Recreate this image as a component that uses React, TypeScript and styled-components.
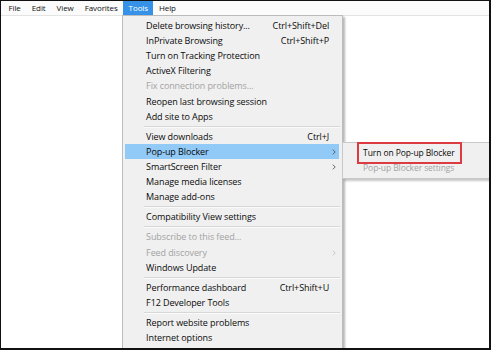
import React from "react";
import styled, { createGlobalStyle } from "styled-components";

const GlobalStyle = createGlobalStyle`
  html, body {
    margin: 0;
    padding: 0;
    background: #ffffff;
  }
  * {
    box-sizing: border-box;
  }
`;

const FONT = `"Open Sans", "Noto Sans", "DejaVu Sans", sans-serif`;

const Frame = styled.div`
  position: relative;
  width: 491px;
  height: 350px;
  display: flex;
  flex-direction: column;
  border-style: solid;
  border-color: #111111;
  border-width: 1px 2px 2px 1px;
  background: #ffffff;
  font-family: ${FONT};
  font-size: 8px;
  color: #000000;
  overflow: hidden;
`;

const MenuBar = styled.div`
  display: flex;
  height: 15px;
  padding-left: 2px;
  background: #fbfbfb;
  border-bottom: 1px solid #e4e4e4;
`;

const BarItem = styled.div<{ $active?: boolean }>`
  position: relative;
  height: 14px;
  line-height: 14px;
  padding: 0 5.5px;
  letter-spacing: -0.1px;
  background: ${(p) => (p.$active ? "#3592e8" : "transparent")};
  color: ${(p) => (p.$active ? "#ffffff" : "#111111")};
`;

const Page = styled.div`
  flex: 1;
  background: #ffffff;
`;

const Dropdown = styled.div`
  position: absolute;
  left: -1px;
  top: 14px;
  width: 221px;
  padding: 2px 0 2px;
  background: #f0f0f0;
  border: 1px solid #bcbcbc;
  box-shadow: 2px 2px 2px rgba(0, 0, 0, 0.28);
  color: #000000;
  font-size: 9px;
  z-index: 2;
`;

const Row = styled.div<{ $hot?: boolean; $disabled?: boolean }>`
  position: relative;
  display: flex;
  align-items: center;
  height: 15.2px;
  margin: 0 3px 0 2px;
  padding: 0 3px 0 21px;
  background: ${(p) => (p.$hot ? "#91c9f7" : "transparent")};
  color: ${(p) => (p.$disabled ? "#a3a3a3" : "#0a0a0a")};
  letter-spacing: -0.1px;
  white-space: nowrap;
`;

const Label = styled.span`
  flex: 1;
`;

const Shortcut = styled.span`
  margin-right: 7px;
`;

const Arrow = styled.svg<{ $disabled?: boolean }>`
  width: 4px;
  height: 6px;
  stroke: ${(p) => (p.$disabled ? "#c4c4c4" : "#555555")};
  fill: none;
`;

const Separator = styled.div`
  height: 4.8px;
  display: flex;
  align-items: center;
  padding-left: 21px;
  &::after {
    content: "";
    flex: 1;
    margin-right: 2px;
    border-top: 1px solid #d7d7d7;
    border-bottom: 1px solid #fbfbfb;
  }
`;

const SubMenu = styled.div`
  position: absolute;
  left: calc(100% + 3px);
  top: -2px;
  width: 148px;
  padding: 2px 0;
  background: #f0f0f0;
  border: 1px solid #c8c8c8;
  box-shadow: 2px 2px 2px rgba(0, 0, 0, 0.22);
  font-size: 8.5px;
  letter-spacing: -0.1px;
`;

const SubRow = styled.div<{ $disabled?: boolean }>`
  display: flex;
  align-items: center;
  height: 15.2px;
  padding-left: 20px;
  color: ${(p) => (p.$disabled ? "#a3a3a3" : "#0a0a0a")};
  white-space: nowrap;
`;

const Marked = styled.span`
  position: relative;
  &::before {
    content: "";
    position: absolute;
    inset: -4px -7px -4px -6px;
    border: 2px solid #dd3b42;
  }
`;

type Item =
  | { kind: "sep" }
  | {
      kind: "item";
      label: string;
      shortcut?: string;
      arrow?: boolean;
      disabled?: boolean;
      hot?: boolean;
    };

const items: Item[] = [
  { kind: "item", label: "Delete browsing history...", shortcut: "Ctrl+Shift+Del" },
  { kind: "item", label: "InPrivate Browsing", shortcut: "Ctrl+Shift+P" },
  { kind: "item", label: "Turn on Tracking Protection" },
  { kind: "item", label: "ActiveX Filtering" },
  { kind: "item", label: "Fix connection problems...", disabled: true },
  { kind: "item", label: "Reopen last browsing session" },
  { kind: "item", label: "Add site to Apps" },
  { kind: "sep" },
  { kind: "item", label: "View downloads", shortcut: "Ctrl+J" },
  { kind: "item", label: "Pop-up Blocker", arrow: true, hot: true },
  { kind: "item", label: "SmartScreen Filter", arrow: true },
  { kind: "item", label: "Manage media licenses" },
  { kind: "item", label: "Manage add-ons" },
  { kind: "sep" },
  { kind: "item", label: "Compatibility View settings" },
  { kind: "sep" },
  { kind: "item", label: "Subscribe to this feed...", disabled: true },
  { kind: "item", label: "Feed discovery", arrow: true, disabled: true },
  { kind: "item", label: "Windows Update" },
  { kind: "sep" },
  { kind: "item", label: "Performance dashboard", shortcut: "Ctrl+Shift+U" },
  { kind: "item", label: "F12 Developer Tools" },
  { kind: "sep" },
  { kind: "item", label: "Report website problems" },
  { kind: "item", label: "Internet options" },
];

const Chevron: React.FC<{ disabled?: boolean }> = ({ disabled }) => (
  <Arrow $disabled={disabled} viewBox="0 0 4 6">
    <path d="M0.8 0.6 L3.2 3 L0.8 5.4" strokeWidth="0.9" />
  </Arrow>
);

const ToolsMenu: React.FC = () => (
  <Dropdown>
    {items.map((it, i) =>
      it.kind === "sep" ? (
        <Separator key={i} />
      ) : (
        <Row key={i} $hot={it.hot} $disabled={it.disabled}>
          <Label>{it.label}</Label>
          {it.shortcut && <Shortcut>{it.shortcut}</Shortcut>}
          {it.arrow && <Chevron disabled={it.disabled} />}
          {it.hot && (
            <SubMenu>
              <SubRow>
                <Marked>Turn on Pop-up Blocker</Marked>
              </SubRow>
              <SubRow $disabled>Pop-up Blocker settings</SubRow>
            </SubMenu>
          )}
        </Row>
      )
    )}
  </Dropdown>
);

const App: React.FC = () => {
  return (
    <>
      <GlobalStyle />
      <Frame>
        <MenuBar>
          <BarItem>File</BarItem>
          <BarItem>Edit</BarItem>
          <BarItem>View</BarItem>
          <BarItem>Favorites</BarItem>
          <BarItem $active>
            Tools
            <ToolsMenu />
          </BarItem>
          <BarItem>Help</BarItem>
        </MenuBar>
        <Page />
      </Frame>
    </>
  );
};

export default App;
